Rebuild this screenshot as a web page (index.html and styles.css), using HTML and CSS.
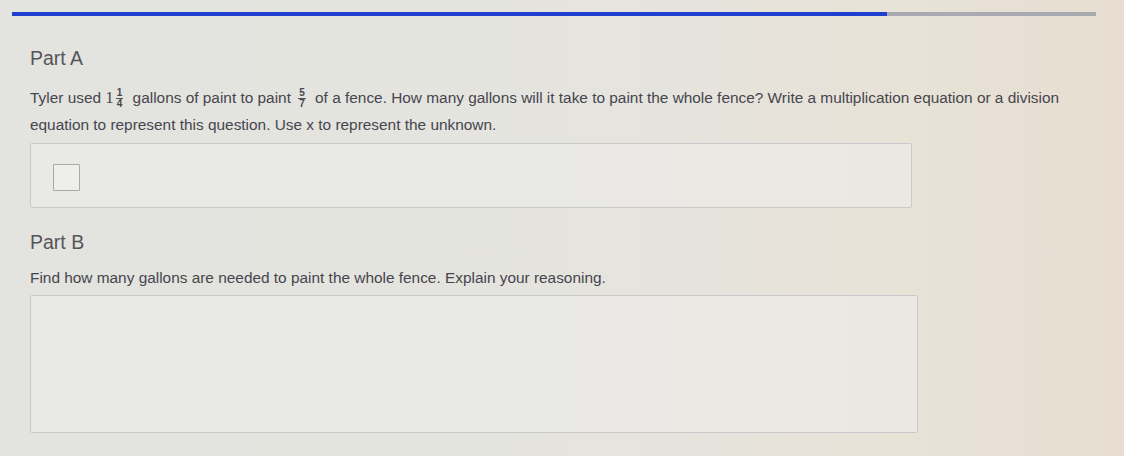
FILE: index.html
```html
<!DOCTYPE html>
<html>
<head>
<meta charset="utf-8">
<link rel="stylesheet" href="styles.css">
</head>
<body>
<div class="page">
  <div class="progress"><div class="progress-fill"></div></div>
  <section class="part part-a">
    <h2 class="part-title">Part A</h2>
    <p class="question">Tyler used <span class="mixed"><span class="whole">1</span><span class="frac"><span class="num">1</span><span class="den">4</span></span></span> gallons of paint to paint <span class="frac"><span class="num">5</span><span class="den">7</span></span> of a fence. How many gallons will it take to paint the whole fence? Write a multiplication equation or a division equation to represent this question. Use x to represent the unknown.</p>
    <div class="answer-box eq-box">
      <div class="checkbox"></div>
    </div>
  </section>
  <section class="part part-b">
    <h2 class="part-title">Part B</h2>
    <p class="question">Find how many gallons are needed to paint the whole fence. Explain your reasoning.</p>
    <div class="answer-box text-box"></div>
  </section>
</div>
</body>
</html>
```

FILE: styles.css
```css
html, body {
  margin: 0;
  padding: 0;
}
body {
  width: 1124px;
  height: 456px;
  overflow: hidden;
  background: linear-gradient(90deg, #e3e3df 0%, #e5e4df 55%, #e8e2d7 80%, #e7ded1 100%);
  font-family: "Liberation Sans", Arial, sans-serif;
  color: #4b4b52;
}
.page {
  padding: 12px 28px 0 12px;
}
.progress {
  height: 4px;
  width: 1084px;
  background: #a9a9b0;
}
.progress-fill {
  height: 100%;
  width: 875px;
  background: #1f3fd0;
}
.part {
  padding-left: 18px;
}
.part-title {
  margin: 0;
  font-weight: normal;
  font-size: 19.5px;
  line-height: 22px;
  color: #55555a;
}
.part-a .part-title {
  margin-top: 31px;
}
.question {
  margin: 0;
  font-size: 15.4px;
  line-height: 27px;
  color: #46464e;
}
.part-a .question {
  margin-top: 15px;
  width: 1060px;
}
.mixed .whole {
  font-family: "Liberation Serif", "Times New Roman", serif;
  font-size: 17px;
  margin-right: 1px;
}
.frac {
  display: inline-flex;
  flex-direction: column;
  align-items: center;
  vertical-align: middle;
  font-size: 10px;
  line-height: 10px;
  margin: 0 5px 0 3px;
  font-weight: bold;
}
.mixed .frac {
  margin-left: 1px;
}
.frac .num {
  border-bottom: 1px solid #55555a;
  padding: 0 1px;
}
.answer-box {
  box-sizing: border-box;
  border: 1px solid #cacacd;
  border-radius: 2px;
  background: rgba(240, 240, 237, 0.45);
}
.eq-box {
  margin-top: 5px;
  width: 882px;
  height: 65px;
  padding: 20px 0 0 22px;
}
.checkbox {
  width: 27px;
  height: 27px;
  box-sizing: border-box;
  border: 1.5px solid #a9a9ad;
  border-radius: 1px;
  background: #eeeeeb;
}
.part-b .part-title {
  margin-top: 23px;
}
.part-b .question {
  margin-top: 11px;
}
.text-box {
  margin-top: 4px;
  width: 888px;
  height: 138px;
}
```
